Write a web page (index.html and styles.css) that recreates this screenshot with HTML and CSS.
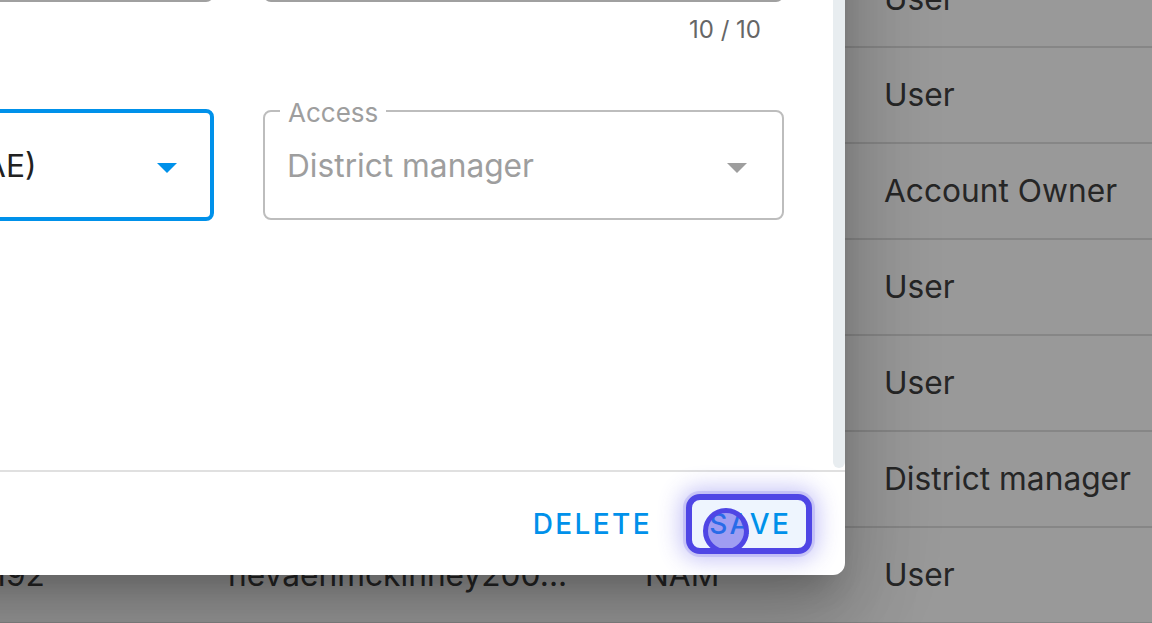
FILE: index.html
```html
<!DOCTYPE html>
<html lang="en">
<head>
<meta charset="utf-8">
<title>Edit user</title>
<link rel="stylesheet" href="styles.css">
</head>
<body>
<main class="page">
  <div class="table">
    <div class="row"><div class="cell id">10186</div><div class="cell">oliviabrown1987...</div><div class="cell">NAM</div><div class="cell">User</div></div>
    <div class="row"><div class="cell id">10187</div><div class="cell">jacksonlee2001...</div><div class="cell">NAM</div><div class="cell">User</div></div>
    <div class="row"><div class="cell id">10188</div><div class="cell">ameliawright199...</div><div class="cell">NAE</div><div class="cell">Account Owner</div></div>
    <div class="row"><div class="cell id">10189</div><div class="cell">lucasmartin2003...</div><div class="cell">NAM</div><div class="cell">User</div></div>
    <div class="row"><div class="cell id">10190</div><div class="cell">harperjones1995...</div><div class="cell">NAM</div><div class="cell">User</div></div>
    <div class="row"><div class="cell id">10191</div><div class="cell">ethanwalker1998...</div><div class="cell">NAE</div><div class="cell">District manager</div></div>
    <div class="row"><div class="cell id">0192</div><div class="cell">nevaehmckinney200...</div><div class="cell">NAM</div><div class="cell">User</div></div>
    <div class="row"><div class="cell id">0193</div><div class="cell">miagarcia2000...</div><div class="cell">NAM</div><div class="cell">User</div></div>
  </div>

  <div class="backdrop"></div>

  <section class="dialog" role="dialog" aria-label="Edit user">
    <div class="dialog-body">
      <div class="dialog-content">
        <div class="fields">
          <div class="field-top"><span class="top-value">Nevaeh McKinney</span></div>
          <div class="field-top"><span class="top-value">5550100192</span></div>
          <div class="spacer"></div>
          <div class="counter">10 / 10</div>
          <div class="select focused">
            <span class="value">North America (NAE)</span>
            <svg class="arrow" viewBox="0 0 48 48" aria-hidden="true"><path d="M14 20l10 10 10-10z" fill="#0091ea"/></svg>
          </div>
          <div class="select disabled">
            <span class="legend">Access</span>
            <span class="value">District manager</span>
            <svg class="arrow" viewBox="0 0 48 48" aria-hidden="true"><path d="M14 20l10 10 10-10z" fill="#9e9e9e"/></svg>
          </div>
        </div>
      </div>
      <div class="scroll-track"></div>
    </div>
    <footer class="dialog-actions">
      <button class="btn delete" type="button">Delete</button>
      <button class="btn save" type="button">Save<span class="cursor"></span></button>
    </footer>
  </section>
</main>
</body>
</html>
```

FILE: styles.css
```css
* { box-sizing: border-box; }

html, body {
  margin: 0;
  height: 100%;
}

body {
  font-family: Inter, "Noto Sans", sans-serif;
  background: #ffffff;
  overflow: hidden;
}

.page {
  position: relative;
  width: 1152px;
  height: 623px;
  overflow: hidden;
}

/* background table */
.table {
  margin-top: -48px;
  margin-left: -40px;
}

.row {
  display: grid;
  grid-template-columns: 268px 417px 239px 1fr;
  align-items: center;
  height: 96px;
  border-bottom: 2px solid #e0e0e0;
  font-size: 31.7px;
  line-height: 40px;
  color: #404040;
  white-space: nowrap;
}

.cell.id {
  padding-left: 13px;
}

.backdrop {
  position: absolute;
  inset: 0;
  background: rgba(0, 0, 0, 0.4);
}

/* dialog */
.dialog {
  position: absolute;
  left: -355px;
  top: -150px;
  width: 1200px;
  height: 725px;
  display: flex;
  flex-direction: column;
  background: #ffffff;
  border-radius: 12px;
  overflow: hidden;
  box-shadow:
    0 22px 30px -14px rgba(0, 0, 0, 0.2),
    0 48px 76px 6px rgba(0, 0, 0, 0.14),
    0 18px 92px 16px rgba(0, 0, 0, 0.12);
}

.dialog-body {
  display: flex;
  height: 620px;
}

.dialog-content {
  flex: 1;
  padding: 40px 49px 0 48px;
}

.scroll-track {
  width: 12px;
  margin-bottom: 2px;
  background: #e8edf0;
  border-radius: 0 0 6px 6px;
}

.fields {
  display: grid;
  grid-template-columns: 521px 521px;
  column-gap: 49px;
  align-items: start;
}

.field-top {
  height: 112px;
  border: 2px solid #a0a0a0;
  border-radius: 8px;
  display: flex;
  align-items: center;
  padding: 0 22px;
  font-size: 31.7px;
  color: #212121;
}

.counter {
  margin-top: 12px;
  padding-right: 23px;
  text-align: right;
  font-size: 24px;
  line-height: 32px;
  color: #666666;
}

.select {
  position: relative;
  display: flex;
  align-items: center;
  border-radius: 8px;
}

.select.focused {
  height: 112px;
  margin-top: 63px;
  border: 4px solid #0091ea;
  padding: 0 19px 0 25px;
  color: #212121;
}

.select.disabled {
  height: 110px;
  margin-top: 64px;
  border: 2px solid #bdbdbd;
  padding: 0 21px 0 22px;
  color: #9e9e9e;
}

.value {
  flex: 1;
  font-size: 31.7px;
  line-height: 40px;
  padding-top: 2px;
  white-space: nowrap;
}

.arrow {
  flex: none;
  width: 48px;
  height: 48px;
  margin-top: 4px;
}

.legend {
  position: absolute;
  left: 15px;
  top: -12px;
  padding: 0 8px;
  background: #ffffff;
  font-size: 26px;
  line-height: 26px;
  color: #9e9e9e;
}

/* actions */
.dialog-actions {
  height: 105px;
  border-top: 2px solid #e0e0e0;
  display: flex;
  justify-content: flex-end;
  align-items: center;
  padding-right: 33px;
}

.btn {
  font-family: inherit;
  font-size: 28px;
  font-weight: 500;
  line-height: 36px;
  letter-spacing: 2.4px;
  text-transform: uppercase;
  color: #0091ea;
  background: none;
  border: 0;
  padding: 12px 16px;
  cursor: pointer;
}

.btn.delete {
  margin-right: 18px;
}

.btn.save {
  position: relative;
  width: 126px;
  height: 60px;
  padding: 0 0 0 2.4px;
  display: flex;
  align-items: center;
  justify-content: center;
  border: 6px solid #4f46e5;
  border-radius: 14px;
  background: #eef5fe;
  box-shadow:
    0 0 0 3px rgba(79, 70, 229, 0.16),
    0 0 22px 6px rgba(79, 70, 229, 0.32);
}

.cursor {
  position: absolute;
  left: 11px;
  top: 8px;
  width: 46px;
  height: 46px;
  border-radius: 50%;
  border: 5px solid #4f46e5;
  background: rgba(79, 70, 229, 0.5);
}
```
